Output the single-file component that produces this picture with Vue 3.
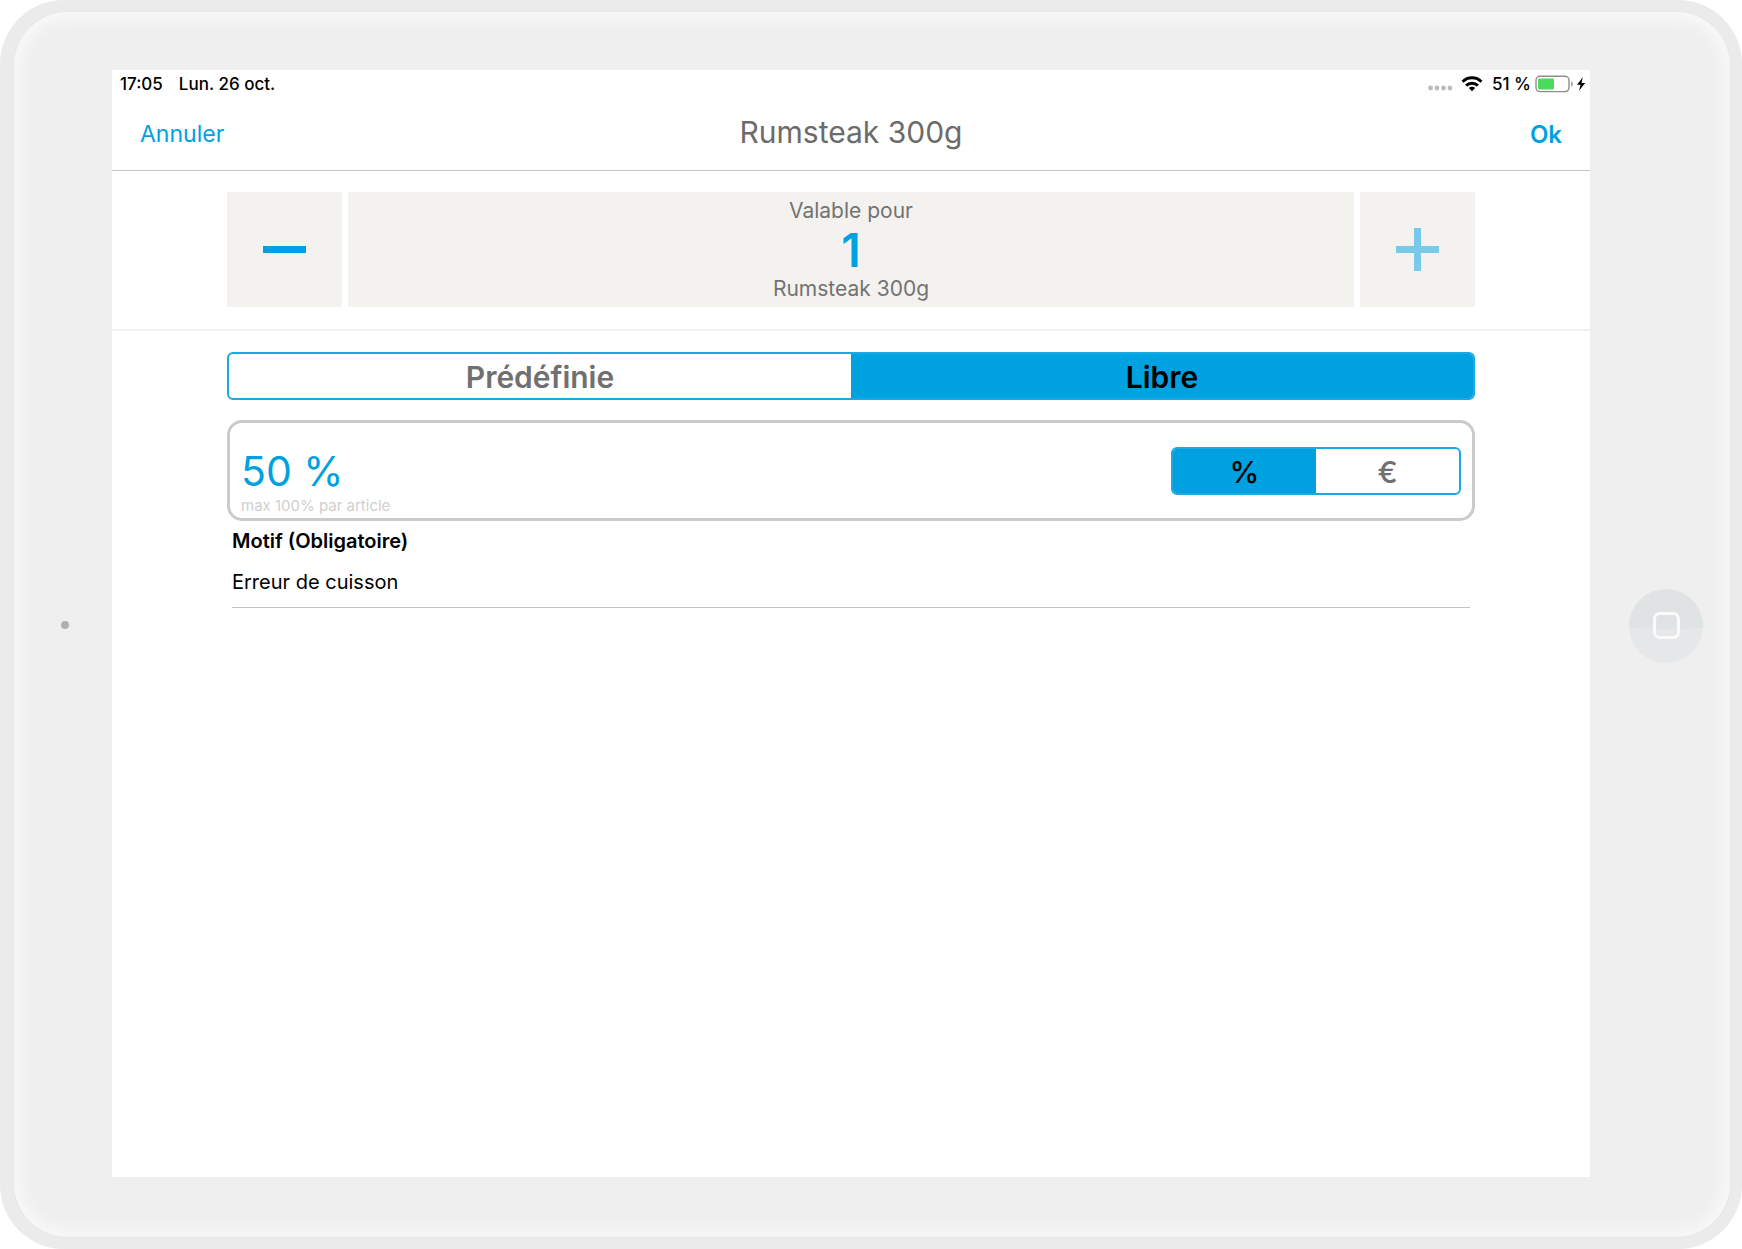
<script setup>
import { ref } from 'vue'

const product = 'Rumsteak 300g'
const quantity = ref(1)
const maxQuantity = 1
const modes = ['Prédéfinie', 'Libre']
const mode = ref('Libre')
const units = ['%', '€']
const unit = ref('%')
const amount = ref('50 %')
const reason = ref('Erreur de cuisson')
</script>

<template>
  <div class="device">
    <div class="face">
      <div class="bezel bezel-left"><span class="camera"></span></div>

      <main class="screen">
        <div class="status">
          <span>17:05</span>
          <span>Lun. 26 oct.</span>
          <div class="status-right">
            <svg class="signal" width="24" height="6" viewBox="0 0 24 6" aria-hidden="true">
              <g fill="#bcbcbc">
                <circle cx="2.5" cy="3" r="2.4" />
                <circle cx="9" cy="3" r="2.4" />
                <circle cx="15.5" cy="3" r="2.4" />
                <circle cx="22" cy="3" r="2.4" />
              </g>
            </svg>
            <svg class="wifi" width="22" height="16" viewBox="0 0 22 16" aria-hidden="true">
              <g fill="none" stroke="#000" stroke-width="3">
                <path d="M1.6 5.7a13.4 13.4 0 0 1 18.8 0" />
                <path d="M5.1 9.6a8.4 8.4 0 0 1 11.8 0" />
              </g>
              <path d="M7.8 12.1a4.6 4.6 0 0 1 6.4 0L11 15.3z" />
            </svg>
            <span class="charge">51 %</span>
            <svg width="51" height="18" viewBox="0 0 51 18" aria-hidden="true">
              <rect x="1" y="1.2" width="33" height="15.4" rx="4" fill="#fff" stroke="#8e8e8e" stroke-width="1.4" />
              <rect x="3" y="3.4" width="16" height="11" rx="1.4" fill="#4bd95f" />
              <path d="M36.2 6.2c2 .8 2 4.6 0 5.4z" fill="#8e8e8e" />
              <path d="M47.8 2.2 42 9.8h3.6L44 15.8l6.2-7.7h-3.7z" />
            </svg>
          </div>
        </div>

        <header class="bar">
          <button type="button" class="link">Annuler</button>
          <h1>{{ product }}</h1>
          <button type="button" class="link ok">Ok</button>
        </header>

        <section class="stepper">
          <button type="button" class="step" aria-label="Moins" @click="quantity = Math.max(1, quantity - 1)">
            <svg width="43" height="43" viewBox="0 0 43 43"><path d="M0 21.5h43" stroke="#00a1e1" stroke-width="7" /></svg>
          </button>
          <div class="count">
            <span>Valable pour</span>
            <strong>{{ quantity }}</strong>
            <span>{{ product }}</span>
          </div>
          <button type="button" class="step" aria-label="Plus" :disabled="quantity >= maxQuantity" @click="quantity++">
            <svg width="43" height="43" viewBox="0 0 43 43"><path d="M0 21.5h43M21.5 0v43" stroke="#79cae9" stroke-width="7" /></svg>
          </button>
        </section>

        <section class="form">
          <div class="segments">
            <button v-for="m in modes" :key="m" type="button" :class="{ on: mode === m }" :aria-pressed="mode === m" @click="mode = m">{{ m }}</button>
          </div>

          <div class="discount">
            <div class="value">
              <input id="amount" v-model="amount" type="text" />
              <label for="amount">max 100% par article</label>
            </div>
            <div class="segments small">
              <button v-for="u in units" :key="u" type="button" :class="{ on: unit === u }" :aria-pressed="unit === u" @click="unit = u">{{ u }}</button>
            </div>
          </div>

          <div class="reason">
            <label for="reason">Motif (Obligatoire)</label>
            <input id="reason" v-model="reason" type="text" />
          </div>
        </section>
      </main>

      <div class="bezel bezel-right">
        <button type="button" class="home" aria-label="Accueil"><span></span></button>
      </div>
    </div>
  </div>
</template>

<style>
body {
  background: #fff;
}
</style>

<style scoped>
.device,
.device * {
  box-sizing: border-box;
}
.device {
  display: flex;
  min-height: 100vh;
  padding: 12px;
  padding-left: 14px;
  border-radius: 64px;
  background: #ebebeb;
  font-family: Inter, "Liberation Sans", sans-serif;
  color: #000;
}
.face {
  flex: 1;
  display: grid;
  grid-template-columns: 98px 1fr 140px;
  padding: 58px 0 60px;
  border-radius: 54px;
  background: #efefef;
  box-shadow: inset 0 0 18px 4px #fbfbfb, 0 0 2px #dedede;
}
.bezel {
  display: flex;
  align-items: center;
  justify-content: center;
}
.bezel-left {
  padding: 2px 0 0 4px;
}
.bezel-right {
  padding: 4px 0 0 12px;
}
.camera {
  width: 8px;
  height: 8px;
  border-radius: 50%;
  background: #b0b0b0;
}
button {
  margin: 0;
  padding: 0;
  border: 0;
  background: none;
  font: inherit;
  color: inherit;
}
input {
  width: 100%;
  margin: 0;
  padding: 0;
  border: 0;
  outline: 0;
  background: none;
  font: inherit;
  color: inherit;
}
.home {
  display: flex;
  align-items: center;
  justify-content: center;
  width: 74px;
  height: 74px;
  border-radius: 50%;
  background: radial-gradient(ellipse 200px 40px at 50% 0, #dfe3e4 99%, #e5e7e9 100%);
}
.home span {
  width: 27px;
  height: 27px;
  border: 3px solid #fafafa;
  border-radius: 7px;
}
.screen {
  display: flex;
  flex-direction: column;
  background: #fff;
}
.status {
  display: flex;
  align-items: center;
  gap: 16px;
  height: 28px;
  padding: 0 4px 0 8px;
  font-size: 17px;
  font-weight: 500;
}
.status-right {
  display: flex;
  align-items: center;
  margin-left: auto;
}
.signal {
  margin: 8px 9px 0 0;
}
.wifi {
  margin-right: 9px;
}
.charge {
  margin-right: 4px;
}
.bar {
  display: grid;
  grid-template-columns: 1fr auto 1fr;
  align-items: center;
  height: 73px;
  padding: 0 28px;
  border-bottom: 1px solid #c4c4c4;
}
.bar h1 {
  margin: 0;
  padding-bottom: 5px;
  font-size: 30px;
  font-weight: 400;
  color: #6b6b6b;
}
.link {
  justify-self: start;
  font-size: 23px;
  color: #00a1e1;
}
.ok {
  justify-self: end;
  font-size: 24px;
  font-weight: 600;
}
.stepper {
  display: flex;
  gap: 6px;
  padding: 21px 115px 22px;
  border-bottom: 2px solid #f2f1ed;
}
.step,
.count {
  display: flex;
  align-items: center;
  justify-content: center;
  height: 115px;
  background: #f3f2ee;
}
.step {
  width: 115px;
}
.count {
  flex: 1;
  flex-direction: column;
  padding-top: 1px;
  font-size: 21px;
  line-height: 32px;
  color: #737373;
}
.count strong {
  font-size: 46px;
  line-height: 46px;
  font-weight: 600;
  color: #00a1e1;
}
.form {
  padding: 21px 115px;
}
.segments {
  display: flex;
  height: 48px;
  overflow: hidden;
  border: 2px solid #1aa9e3;
  border-radius: 6px;
  font-size: 30px;
  font-weight: 600;
  color: #707070;
}
.segments button {
  flex: 1;
  padding-top: 1px;
}
.segments .on {
  background: #00a1e1;
  color: #000;
}
.small {
  width: 290px;
  font-weight: 500;
}
.discount {
  display: flex;
  align-items: center;
  justify-content: space-between;
  height: 101px;
  margin-top: 20px;
  padding: 1px 11px 0;
  border: 3px solid #cbcbcb;
  border-radius: 15px;
}
.value {
  display: flex;
  flex-direction: column;
  padding-top: 19px;
}
.value input {
  height: 50px;
  padding-bottom: 2px;
  font-size: 41px;
  font-weight: 400;
  color: #00a1e1;
}
.value label {
  font-size: 15px;
  line-height: 18px;
  color: #cfcfcf;
}
.reason {
  margin: 0 5px;
  border-bottom: 1px solid #c4c4c4;
}
.reason label {
  display: block;
  font-size: 20px;
  line-height: 40px;
  font-weight: 600;
}
.reason input {
  display: block;
  height: 46px;
  padding-bottom: 4px;
  font-size: 20px;
}
</style>
